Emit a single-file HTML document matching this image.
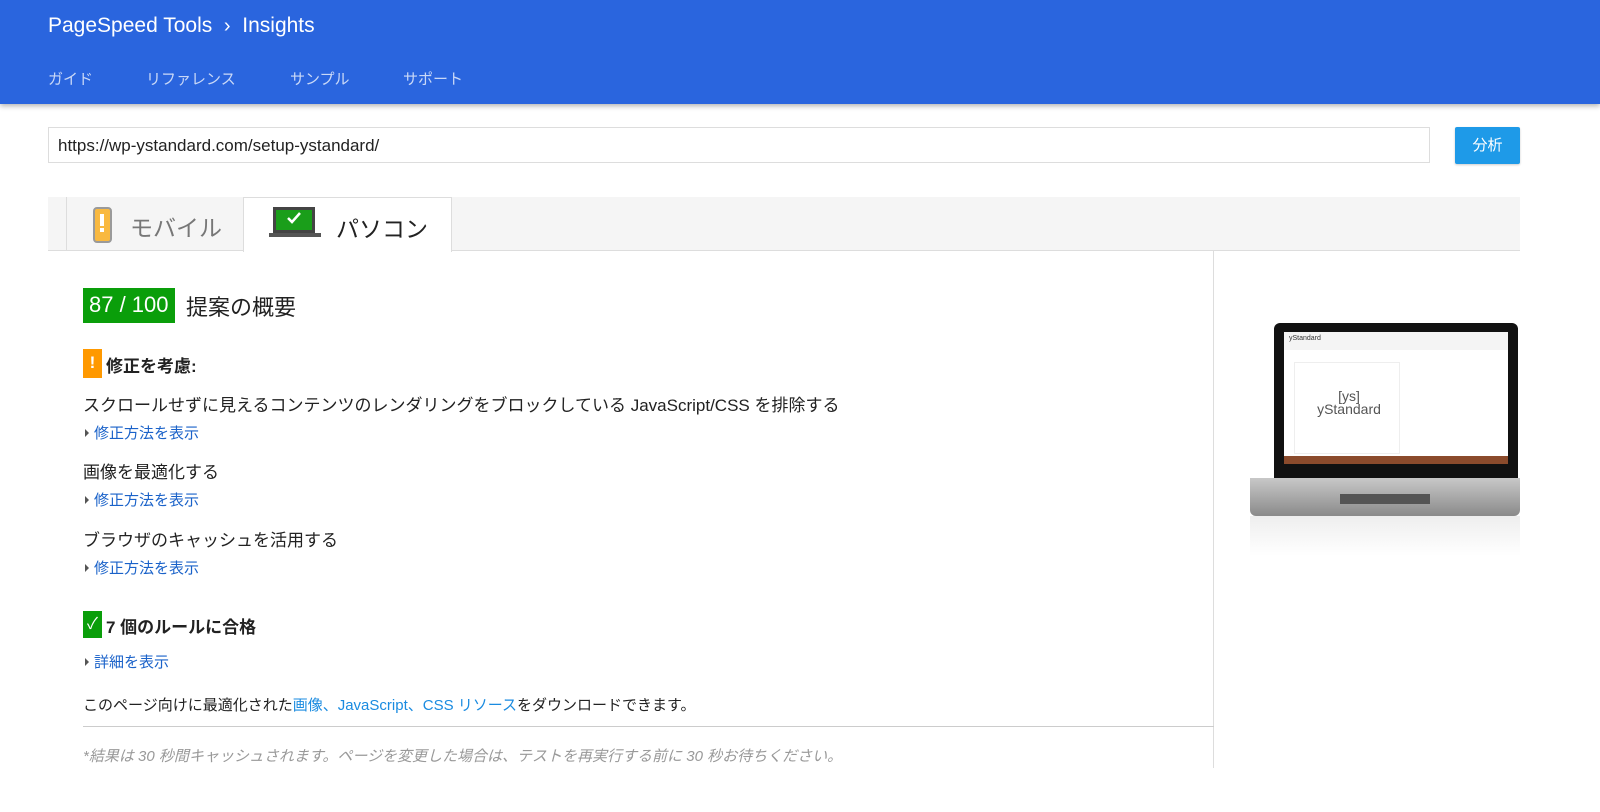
<!DOCTYPE html>
<html><head><meta charset="utf-8"><style>
*{margin:0;padding:0;box-sizing:border-box}
body{width:1600px;height:812px;background:#fff;font-family:"Liberation Sans","Noto Sans CJK JP",sans-serif;color:#222;position:relative;overflow:hidden}
.hdr{position:absolute;left:0;top:0;width:1600px;height:104px;background:#2a65de;box-shadow:0 2px 5px rgba(0,0,0,.3)}
.hdr .t{position:absolute;left:48px;top:14px;color:#fff;font-size:21px}
.hdr .n{position:absolute;top:68px;color:rgba(255,255,255,.75);font-size:15px}
.url{position:absolute;left:48px;top:127px;width:1382px;height:36px;border:1px solid #ddd;font-size:17px;padding:8px 9px;color:#222}
.btn{position:absolute;left:1455px;top:127px;width:65px;height:37px;background:#1e9ae8;color:#fff;font-size:15px;text-align:center;line-height:37px;border-radius:2px;box-shadow:0 1px 2px rgba(0,0,0,.2)}
.tabs{position:absolute;left:48px;top:197px;width:1472px;height:54px;background:#f5f5f5;border-bottom:1px solid #ddd}
.tab1{position:absolute;left:18px;top:0;width:176px;height:53px;border-left:1px solid #ddd}
.tab2{position:absolute;left:195px;top:0;width:209px;height:55px;background:#fff;border:1px solid #ddd;border-bottom:none}
.main{position:absolute;left:48px;top:251px;width:1166px;height:517px;border-right:1px solid #ddd}
.a{position:absolute;font-size:17px;color:#222}
.l{position:absolute;font-size:15px;color:#1a62c9}
.l:before{content:"";display:inline-block;border-left:4px solid #555;border-top:4px solid transparent;border-bottom:4px solid transparent;margin-right:5px;vertical-align:1px}
</style></head><body>
<div class="hdr">
<div class="t">PageSpeed Tools &nbsp;<span style="font-size:20px">&#x203A;</span>&nbsp; Insights</div>
<div class="n" style="left:48px">ガイド</div>
<div class="n" style="left:146px">リファレンス</div>
<div class="n" style="left:290px">サンプル</div>
<div class="n" style="left:403px">サポート</div>
</div>
<div class="url">https://wp-ystandard.com/setup-ystandard/</div>
<div class="btn">分析</div>
<div class="tabs">
<div class="tab1">
<div style="position:absolute;left:26px;top:10px;width:19px;height:36px;background:#f9b940;border:2px solid #9a9a9a;border-radius:4px"></div>
<div style="position:absolute;left:33px;top:17px;width:4px;height:12px;background:#fff"></div>
<div style="position:absolute;left:33px;top:31px;width:4px;height:4px;background:#fff"></div>
<div style="position:absolute;left:63px;top:12px;font-size:23px;color:#777">モバイル</div>
</div>
<div class="tab2">
<div style="position:absolute;left:29px;top:9px;width:42px;height:26px;background:#1a9e1a;border:3px solid #444"></div>
<div style="position:absolute;left:25px;top:35px;width:52px;height:4px;background:#555"></div>
<svg style="position:absolute;left:42px;top:12px" width="16" height="16"><path d="M2 8l4 4 8-9" stroke="#fff" stroke-width="2.5" fill="none"/></svg>
<div style="position:absolute;left:92px;top:12px;font-size:23px;color:#222">パソコン</div>
</div>
</div>
<div class="main">
<div style="position:absolute;left:35px;top:37px;background:#0a9e0a;color:#fff;font-size:22px;padding:4px 6px;height:35px">87 / 100</div>
<div style="position:absolute;left:138px;top:39px;font-size:22px;color:#222">提案の概要</div>
<div style="position:absolute;left:35px;top:98px;width:19px;height:29px;background:#f90;color:#fff;font-weight:bold;text-align:center;font-size:17px;line-height:28px">!</div>
<div style="position:absolute;left:58px;top:101px;font-size:17px;font-weight:bold">修正を考慮:</div>
<div class="a" style="left:35px;top:140px">スクロールせずに見えるコンテンツのレンダリングをブロックしている JavaScript/CSS を排除する</div>
<div class="l" style="left:37px;top:171px">修正方法を表示</div>
<div class="a" style="left:35px;top:207px">画像を最適化する</div>
<div class="l" style="left:37px;top:238px">修正方法を表示</div>
<div class="a" style="left:35px;top:275px">ブラウザのキャッシュを活用する</div>
<div class="l" style="left:37px;top:306px">修正方法を表示</div>
<div style="position:absolute;left:35px;top:360px;width:19px;height:27px;background:#0a9e0a;color:#fff;text-align:center;font-size:16px;line-height:27px">✓</div>
<div style="position:absolute;left:58px;top:362px;font-size:17px;font-weight:bold">7 個のルールに合格</div>
<div class="l" style="left:37px;top:400px">詳細を表示</div>
<div style="position:absolute;left:35px;top:443px;font-size:15px">このページ向けに最適化された<span style="color:#1a8be0">画像、JavaScript、CSS リソース</span>をダウンロードできます。</div>
<div style="position:absolute;left:35px;top:475px;width:1131px;border-top:1px solid #ccc"></div>
<div style="position:absolute;left:35px;top:494px;font-size:15px;color:#999;font-style:italic">*結果は 30 秒間キャッシュされます。ページを変更した場合は、テストを再実行する前に 30 秒お待ちください。</div>
</div>
<div style="position:absolute;left:1274px;top:323px;width:244px;height:157px;background:#111;border-radius:6px 6px 0 0"></div>
<div style="position:absolute;left:1284px;top:332px;width:224px;height:132px;background:#fff;overflow:hidden">
<div style="height:18px;background:#f4f4f4;font-size:7px;color:#333;padding:3px 5px">yStandard</div>
<div style="position:absolute;left:10px;top:30px;width:106px;height:92px;border:1px solid #eee"></div>
<div style="position:absolute;left:20px;top:58px;width:90px;text-align:center;font-size:14px;color:#555;line-height:13px">[ys]<br>yStandard</div>
<div style="position:absolute;left:0;bottom:0;width:224px;height:8px;background:#8b4b2c"></div>
</div>
<div style="position:absolute;left:1250px;top:478px;width:270px;height:38px;background:linear-gradient(#c8c8c8,#8a8a8a);border-radius:0 0 6px 6px"></div>
<div style="position:absolute;left:1340px;top:494px;width:90px;height:10px;background:#555"></div>
<div style="position:absolute;left:1250px;top:516px;width:270px;height:40px;background:linear-gradient(#eee,#fff)"></div>
</body></html>
